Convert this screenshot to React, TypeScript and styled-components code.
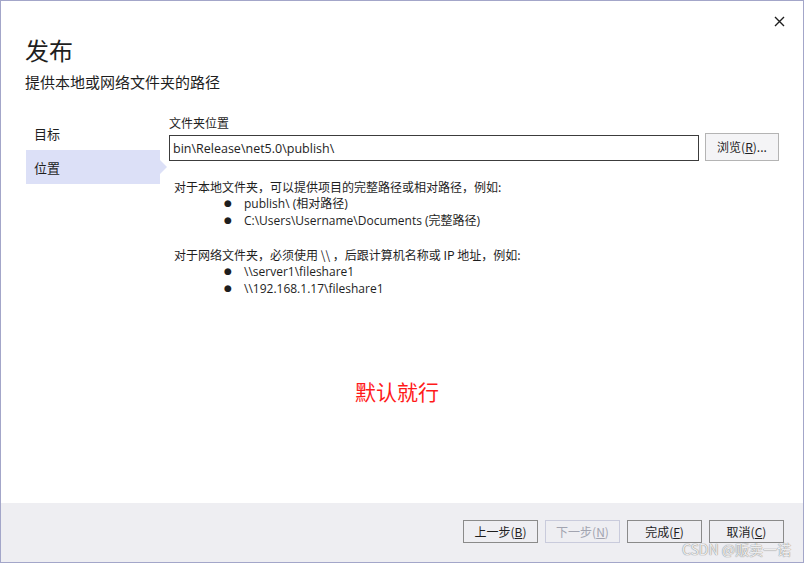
import React from "react";
import styled, { createGlobalStyle } from "styled-components";

const Global = createGlobalStyle`
  html, body { margin: 0; padding: 0; background: #ffffff; }
  body { font-family: "Segoe UI", "Open Sans", "Noto Sans CJK SC", sans-serif; }
  * { box-sizing: border-box; }
`;

const Window = styled.div`
  position: relative;
  width: 804px;
  height: 563px;
  border: 1px solid #a3a6c9;
  background: #ffffff;
  display: flex;
  flex-direction: column;
  color: #1e1e1e;
`;

const CloseButton = styled.button`
  position: absolute;
  top: 10px;
  right: 12px;
  width: 24px;
  height: 20px;
  border: none;
  background: transparent;
  padding: 0;
  display: flex;
  align-items: center;
  justify-content: center;
`;

const Header = styled.div`
  padding: 33px 24px 0 24px;
`;

const Title = styled.h1`
  margin: 0;
  font-family: "Noto Sans CJK SC", sans-serif;
  font-weight: 400;
  font-size: 24px;
  line-height: 32px;
  color: #1e1e1e;
`;

const Subtitle = styled.div`
  margin-top: 6px;
  font-family: "Noto Sans CJK SC", sans-serif;
  font-size: 15px;
  line-height: 20px;
  color: #1e1e1e;
`;

const Body = styled.div`
  flex: 1;
  display: flex;
  padding: 22px 24px 0 25px;
`;

const Nav = styled.nav`
  width: 134px;
  margin-top: 2px;
  display: flex;
  flex-direction: column;
`;

const NavItem = styled.div<{ $active?: boolean }>`
  position: relative;
  height: 34px;
  padding-left: 8px;
  display: flex;
  align-items: center;
  font-family: "Noto Sans CJK SC", sans-serif;
  font-size: 13px;
  color: #1e1e1e;
  background: ${(p) => (p.$active ? "#dce0f7" : "transparent")};
  &::after {
    content: "";
    display: ${(p) => (p.$active ? "block" : "none")};
    position: absolute;
    right: -7px;
    top: 10px;
    border-left: 7px solid #dce0f7;
    border-top: 7px solid transparent;
    border-bottom: 7px solid transparent;
  }
`;

const Content = styled.div`
  flex: 1;
  margin-left: 9px;
  display: flex;
  flex-direction: column;
`;

const Label = styled.div`
  font-family: "Noto Sans CJK SC", sans-serif;
  font-size: 12px;
  line-height: 18px;
  color: #1e1e1e;
`;

const PathRow = styled.div`
  margin-top: 1px;
  display: flex;
  align-items: flex-end;
  gap: 6px;
`;

const PathInput = styled.input`
  flex: 1;
  height: 26px;
  border: 1px solid #3c3c3c;
  padding: 0 3px;
  font-family: "Segoe UI", "Open Sans", "Noto Sans CJK SC", sans-serif;
  font-size: 12.5px;
  color: #1e1e1e;
  background: #ffffff;
  outline: none;
`;

const Button = styled.button<{ $disabled?: boolean }>`
  width: 75px;
  height: 23px;
  padding: 0;
  border: 1px solid ${(p) => (p.$disabled ? "#c9cbdc" : "#8a8a8a")};
  background: #eeeef2;
  font-family: "Noto Sans CJK SC", sans-serif;
  font-size: 12px;
  color: ${(p) => (p.$disabled ? "#a2a4b0" : "#1e1e1e")};
  display: flex;
  align-items: center;
  justify-content: center;
  line-height: 1;
`;

const BrowseButton = styled(Button)`
  width: 74px;
  height: 28px;
  border-color: #b4b4b4;
  background: #f4f4f6;
`;

const Help = styled.div`
  margin-top: 17px;
  margin-left: 5px;
  font-family: "Segoe UI", "Open Sans", "Noto Sans CJK SC", sans-serif;
  font-size: 12px;
  line-height: 17px;
  color: #1e1e1e;
`;

const HelpLine = styled.div`
  font-family: "Noto Sans CJK SC", sans-serif;
`;

const List = styled.ul`
  list-style: none;
  margin: 0 0 17px 0;
  padding: 0 0 0 50px;
`;

const Item = styled.li`
  display: flex;
  align-items: center;
  height: 17px;
  &::before {
    content: "●";
    font-size: 9px;
    width: 20px;
    font-family: "DejaVu Sans", sans-serif;
  }
`;

const Note = styled.div`
  margin-top: 63px;
  margin-left: 186px;
  font-family: "Noto Sans CJK SC", sans-serif;
  font-size: 21px;
  line-height: 28px;
  color: #ff1a1a;
`;

const Footer = styled.div`
  height: 59px;
  background: #eeeef2;
  display: flex;
  justify-content: flex-end;
  align-items: flex-start;
  gap: 7px;
  padding: 17px 19px 0 0;
`;

const Watermark = styled.div`
  position: absolute;
  right: 12px;
  bottom: 3px;
  font-family: "Noto Sans CJK SC", sans-serif;
  font-size: 14px;
  color: rgba(255, 255, 255, 0.85);
  text-shadow: 0 0 1px #8a8a8a, 0 0 1px #8a8a8a;
  pointer-events: none;
`;

export default function App() {
  return (
    <>
      <Global />
      <Window>
        <CloseButton aria-label="关闭">
          <svg width="11" height="11" viewBox="0 0 11 11">
            <path d="M1 1 L10 10 M10 1 L1 10" stroke="#1e1e1e" strokeWidth="1.4" />
          </svg>
        </CloseButton>
        <Header>
          <Title>发布</Title>
          <Subtitle>提供本地或网络文件夹的路径</Subtitle>
        </Header>
        <Body>
          <Nav>
            <NavItem>目标</NavItem>
            <NavItem $active>位置</NavItem>
          </Nav>
          <Content>
            <Label>文件夹位置</Label>
            <PathRow>
              <PathInput defaultValue={"bin\\Release\\net5.0\\publish\\"} />
              <BrowseButton>
                浏览(<u>R</u>)...
              </BrowseButton>
            </PathRow>
            <Help>
              <HelpLine>对于本地文件夹，可以提供项目的完整路径或相对路径，例如:</HelpLine>
              <List>
                <Item>publish\ (相对路径)</Item>
                <Item>C:\Users\Username\Documents (完整路径)</Item>
              </List>
              <HelpLine>对于网络文件夹，必须使用 \\ ，后跟计算机名称或 IP 地址，例如:</HelpLine>
              <List>
                <Item>\\server1\fileshare1</Item>
                <Item>\\192.168.1.17\fileshare1</Item>
              </List>
            </Help>
            <Note>默认就行</Note>
          </Content>
        </Body>
        <Footer>
          <Button>
            上一步(<u>B</u>)
          </Button>
          <Button $disabled>
            下一步(<u>N</u>)
          </Button>
          <Button>
            完成(<u>F</u>)
          </Button>
          <Button>
            取消(<u>C</u>)
          </Button>
        </Footer>
        <Watermark>CSDN @贩卖一诺</Watermark>
      </Window>
    </>
  );
}
